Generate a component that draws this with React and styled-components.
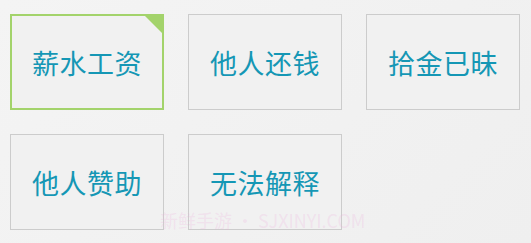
import React, { useState } from 'react';
import styled, { createGlobalStyle } from 'styled-components';

const GlobalStyle = createGlobalStyle`
    body, html {
        margin: 0;
        padding: 0;
        width: 100%;
        height: 100%;
        overflow: hidden;
    }
    body {
        background: linear-gradient(135deg, #f4f4f4 0%, #efefef 100%);
        font-family: "Noto Sans CJK SC", "Noto Sans", sans-serif;
    }
`;

const Page = styled.div`
    position: relative;
    width: 531px;
    height: 243px;
    padding: 14px 0 0 10px;
    box-sizing: border-box;
`;

const Grid = styled.div`
    display: grid;
    grid-template-columns: repeat(3, 154px);
    grid-auto-rows: 96px;
    column-gap: 24px;
    row-gap: 24px;
`;

const Option = styled.button`
    position: relative;
    box-sizing: border-box;
    display: flex;
    align-items: center;
    justify-content: center;
    margin: 0;
    padding: 0;
    background: #f1f1f1;
    border: ${p => (p.$active ? '2px solid #a3d36b' : '1px solid #cccccc')};
    color: #1597b5;
    font-family: "Noto Sans CJK SC", "Noto Sans", sans-serif;
    font-size: 27px;
    letter-spacing: 0.5px;
    cursor: pointer;
    outline: none;
`;

const Corner = styled.span`
    position: absolute;
    top: 0;
    right: 0;
    width: 0;
    height: 0;
    border-style: solid;
    border-width: 0 17px 17px 0;
    border-color: transparent #a3d36b transparent transparent;
`;

const Watermark = styled.div`
    position: absolute;
    left: 160px;
    top: 207px;
    font-family: "Noto Sans CJK SC", "Noto Sans", sans-serif;
    font-size: 18px;
    color: rgba(238, 175, 220, 0.24);
    white-space: nowrap;
    pointer-events: none;
`;

const items = ['薪水工资', '他人还钱', '拾金已昧', '他人赞助', '无法解释'];

export default function App() {
    const [selected, setSelected] = useState(0);

    return (
        <>
            <GlobalStyle />
            <Page>
                <Grid>
                    {items.map((label, i) => (
                        <Option key={label} $active={selected === i} onClick={() => setSelected(i)}>
                            {label}
                            {selected === i && <Corner />}
                        </Option>
                    ))}
                </Grid>
                <Watermark>新鲜手游 • SJXINYI.COM</Watermark>
            </Page>
        </>
    );
}
